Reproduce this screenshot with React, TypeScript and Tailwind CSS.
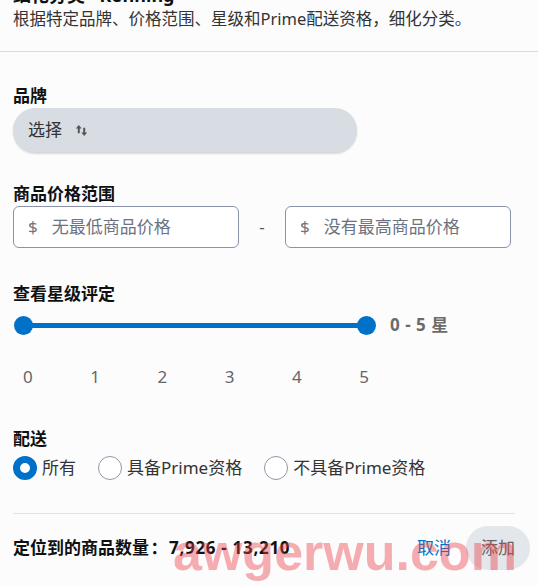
import { useState } from "react";

const FONT = { fontFamily: '"Noto Sans", "Noto Sans CJK SC", sans-serif' };

const TICKS = [0, 1, 2, 3, 4, 5];

type Delivery = "all" | "prime" | "nonprime";

const DELIVERY: { key: Delivery; label: string }[] = [
  { key: "all", label: "所有" },
  { key: "prime", label: "具备Prime资格" },
  { key: "nonprime", label: "不具备Prime资格" },
];

export default function App() {
  const [delivery, setDelivery] = useState<Delivery>("all");

  return (
    <div className="relative w-[538px] h-[586px] overflow-hidden bg-[#fcfcfd] text-[#0f1111] text-[17px]" style={FONT}>
      {/* Header */}
      <div className="px-[13px] pb-[20px] border-b border-[#dcdcdc]">
        <div className="-mt-[17px] text-[18px] leading-[24px] font-bold">细化分类 · Refining</div>
        <div className="text-[16.5px] leading-[24px] text-[#333]">根据特定品牌、价格范围、星级和Prime配送资格，细化分类。</div>
      </div>

      <div className="px-[13px] pt-[32px]">
        {/* Brand */}
        <Label>品牌</Label>
        <button className="flex items-center gap-[13px] w-[344px] h-[44px] px-[15px] rounded-full bg-[#d8dce3] shadow-[0_2px_2px_rgba(0,0,0,0.15)] text-[#333]">
          <span>选择</span>
          <SortIcon />
        </button>

        {/* Price */}
        <div className="mt-[30px]">
          <Label>商品价格范围</Label>
          <div className="flex items-center">
            <PriceInput placeholder="无最低商品价格" />
            <span className="w-[46px] text-center text-[#555]">-</span>
            <PriceInput placeholder="没有最高商品价格" />
          </div>
        </div>

        {/* Rating */}
        <div className="mt-[34px]">
          <Label>查看星级评定</Label>
          <div className="mt-[7px] flex items-center h-[24px]">
            <div className="relative w-[363px] h-[19px] flex items-center">
              <div className="mx-[10px] flex-1 h-[5px] bg-[#0071c8]" />
              <span className="absolute left-[1px] w-[19px] h-[19px] rounded-full bg-[#0071c8]" />
              <span className="absolute right-0 w-[19px] h-[19px] rounded-full bg-[#0071c8]" />
            </div>
            <span className="ml-[14px] font-bold text-[#6b6b6b] tracking-[0.5px]">0 - 5 星</span>
          </div>
          <div className="mt-[28px] w-[346px] ml-[10px] flex justify-between leading-[24px] text-[#666]">
            {TICKS.map(t => (
              <span key={t}>{t}</span>
            ))}
          </div>
        </div>

        {/* Delivery */}
        <div className="mt-[38px]">
          <Label>配送</Label>
          <div className="mt-[5px] flex items-center h-[24px]">
            {DELIVERY.map(d => (
              <button key={d.key} onClick={() => setDelivery(d.key)} className="flex items-center mr-[22px] text-[#333]">
                <span
                  className={
                    delivery === d.key
                      ? "w-[24px] h-[24px] rounded-full border-[7px] border-[#0071c8] bg-white"
                      : "w-[24px] h-[24px] rounded-full border border-[#8d96a8] bg-white"
                  }
                />
                <span className="ml-[5px]">{d.label}</span>
              </button>
            ))}
          </div>
        </div>

        {/* Footer */}
        <div className="mt-[33px] mr-[10px] border-t border-[#e3e3ea]" />
        <div className="mt-[12px] flex items-center h-[44px] -mr-[5px]">
          <span className="font-bold">
            定位到的商品数量<span className="inline-block w-[20px] text-center">：</span>
            <span className="tracking-[0.7px]">7,926 - 13,210</span>
          </span>
          <span className="ml-auto text-[#0071c8]">取消</span>
          <button className="ml-[15px] h-[44px] px-[15px] rounded-full bg-[#e3e6eb] text-[#666]">添加</button>
        </div>
      </div>

      {/* Site watermark */}
      <div
        className="absolute left-[173px] top-[526px] text-[52px] leading-none font-bold text-[rgba(236,62,72,0.42)] pointer-events-none"
        style={{ fontFamily: '"Liberation Sans", Arial, sans-serif' }}
      >
        awgerwu.com
      </div>
    </div>
  );
}

function Label({ children }: { children: string }) {
  return <div className="leading-[24px] font-bold">{children}</div>;
}

function PriceInput({ placeholder }: { placeholder: string }) {
  return (
    <div className="flex items-center w-[226px] h-[42px] px-[14px] rounded-[6px] border border-[#8a93a7] bg-white text-[#6c727f]">
      <span>$</span>
      <span className="ml-[14px]">{placeholder}</span>
    </div>
  );
}

function SortIcon() {
  return (
    <svg width="13" height="13" viewBox="0 0 12 12" fill="#555">
      <path d="M3.5 1 L6.2 4.2 H4.4 V8.5 H2.6 V4.2 H0.8 Z" />
      <path d="M8.5 11 L5.8 7.8 H7.6 V3.5 H9.4 V7.8 H11.2 Z" />
    </svg>
  );
}
